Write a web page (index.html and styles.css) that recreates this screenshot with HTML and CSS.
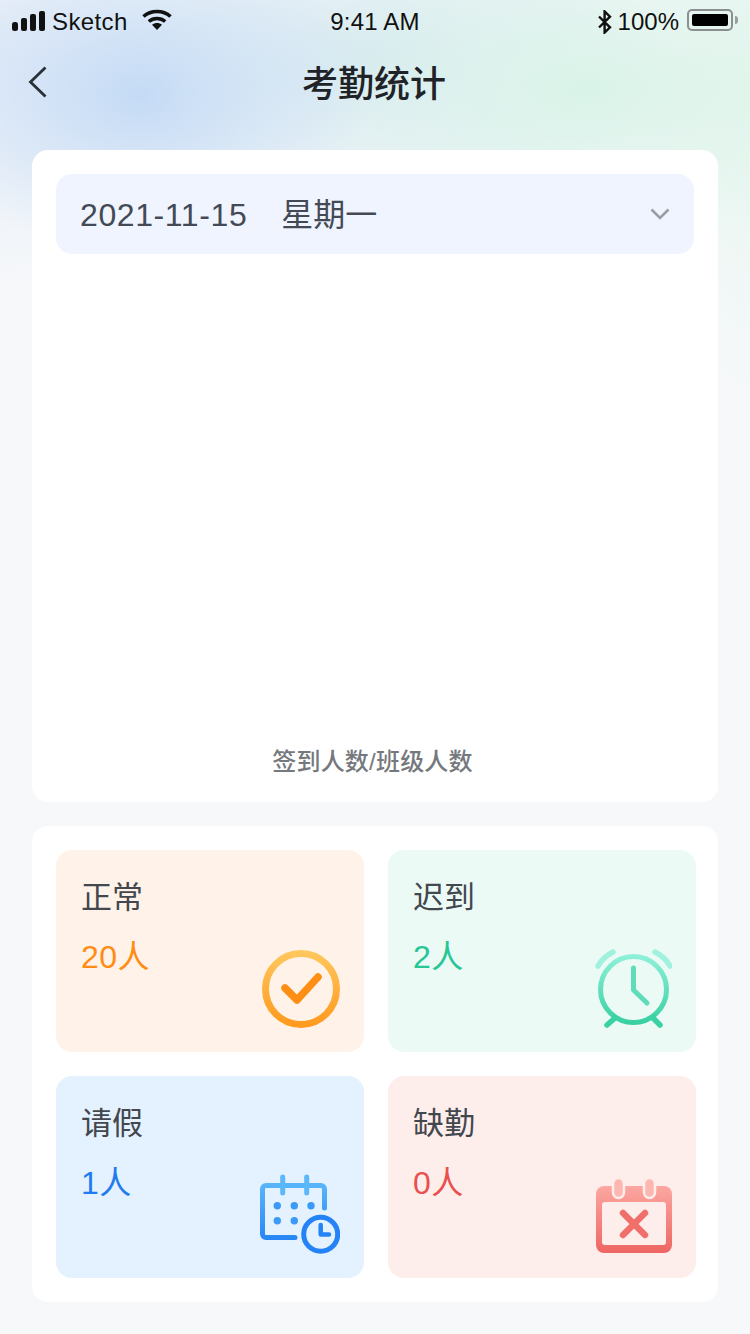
FILE: index.html
```html
<!DOCTYPE html>
<html lang="zh-CN">
<head>
    <meta charset="UTF-8">
    <meta name="viewport" content="width=device-width, initial-scale=1.0">
    <title>考勤统计</title>
    <link rel="stylesheet" href="styles.css">
</head>
<body>
    <div id="page">
        <!-- 状态栏 -->
        <div class="status-bar">
            <div class="status-left">
                <svg class="signal" width="33" height="20" viewBox="0 0 33 20">
                    <rect x="0" y="11" width="6" height="9" rx="2.5"/>
                    <rect x="9" y="7" width="6" height="13" rx="2"/>
                    <rect x="18" y="3" width="6" height="17" rx="2"/>
                    <rect x="27" y="0" width="6" height="20" rx="2"/>
                </svg>
                <span>Sketch</span>
                <svg class="wifi" width="30" height="22" viewBox="0 0 30 22">
                    <path d="M1.500 7.500C9 .8 21 .8 28.500 7.500" fill="none" stroke="#111" stroke-width="3.600"/>
                    <path d="M6.800 12.500c4.600-4 11.800-4 16.400 0" fill="none" stroke="#111" stroke-width="3.600"/>
                    <path d="M10 15.800c3-2.300 7-2.300 10 0L15 21z" fill="#111"/>
                </svg>
            </div>
            <div class="status-time">9:41 AM</div>
            <div class="status-right">
                <svg class="bt" width="14" height="24" viewBox="0 0 14 24">
                    <path d="M1 6.500l11 10.800L6.600 22.600V1.400L12 6.700 1 17.500" fill="none" stroke="#111" stroke-width="2.400"/>
                </svg>
                <span>100%</span>
                <div class="battery"><div class="battery-fill"></div></div>
                <div class="battery-cap"></div>
            </div>
        </div>

        <!-- 导航 -->
        <div class="nav">
            <svg class="back" width="20" height="32" viewBox="0 0 20 32">
                <path d="M17.500 1.500L2.500 16l15 14.500" fill="none" stroke="#2b3036" stroke-width="2.800"/>
            </svg>
            <h1 class="nav-title">考勤统计</h1>
        </div>

        <!-- 日期和图表 -->
        <div class="card chart-card">
            <div class="date-select">
                <span class="date-text">2021-11-15<i class="week">星期一</i></span>
                <svg width="20" height="12" viewBox="0 0 20 12">
                    <path d="M1.500 1.500L10 10l8.500-8.500" fill="none" stroke="#9a9da3" stroke-width="2.600"/>
                </svg>
            </div>
            <div class="chart-caption">签到人数/班级人数</div>
        </div>

        <!-- 统计 -->
        <div class="card stat-card">
            <div class="stat-grid">
                <div class="tile tile-normal">
                    <div class="tile-name">正常</div>
                    <div class="tile-num">20人</div>
                    <svg class="tile-icon" width="80" height="80" viewBox="0 0 80 80">
                        <defs>
                            <linearGradient id="gOrange" x1="0" y1="0" x2="0" y2="1">
                                <stop offset="0" stop-color="#ffc65c"/>
                                <stop offset="1" stop-color="#ff9a1f"/>
                            </linearGradient>
                        </defs>
                        <circle cx="41" cy="41" r="35.500" fill="none" stroke="url(#gOrange)" stroke-width="7"/>
                        <path d="M25 40l12 12L58 29" fill="none" stroke="#ff8f14" stroke-width="7.500" stroke-linecap="round" stroke-linejoin="round"/>
                    </svg>
                </div>
                <div class="tile tile-late">
                    <div class="tile-name">迟到</div>
                    <div class="tile-num">2人</div>
                    <svg class="tile-icon" width="84" height="80" viewBox="0 0 84 80">
                        <defs>
                            <linearGradient id="gGreen" gradientUnits="userSpaceOnUse" x1="0" y1="8" x2="0" y2="78">
                                <stop offset="0" stop-color="#8df0d8"/>
                                <stop offset="1" stop-color="#35cf9f"/>
                            </linearGradient>
                        </defs>
                        <circle cx="45.500" cy="41.500" r="33" fill="none" stroke="url(#gGreen)" stroke-width="5"/>
                        <path d="M45.500 20v22L59 55" fill="none" stroke="#5fdcb9" stroke-width="5" stroke-linecap="round" stroke-linejoin="round"/>
                        <path d="M10 18Q15 9 25 4M67 4Q77 9 82 18" fill="none" stroke="#a0f2df" stroke-width="5.500" stroke-linecap="round"/>
                        <path d="M19 77l8-7M72 77l-7-7" fill="none" stroke="#3ad2a4" stroke-width="5.500" stroke-linecap="round"/>
                    </svg>
                </div>
                <div class="tile tile-leave">
                    <div class="tile-name">请假</div>
                    <div class="tile-num">1人</div>
                    <svg class="tile-icon" width="80" height="80" viewBox="0 0 80 80">
                        <defs>
                            <linearGradient id="gBlue" gradientUnits="userSpaceOnUse" x1="0" y1="0" x2="0" y2="78">
                                <stop offset="0" stop-color="#62bdfb"/>
                                <stop offset="1" stop-color="#1c7cf5"/>
                            </linearGradient>
                        </defs>
                        <path d="M35 63.500H6a3.500 3.500 0 0 1-3.500-3.500V15A3.500 3.500 0 0 1 6 11.500h55a3.500 3.500 0 0 1 3.500 3.500v19" fill="none" stroke="url(#gBlue)" stroke-width="5" stroke-linecap="round"/>
                        <path d="M22.700 3v16M46.700 3v16" fill="none" stroke="#5cb8fa" stroke-width="5" stroke-linecap="round"/>
                        <g fill="#3b99f8">
                            <circle cx="17.300" cy="31.700" r="3.700"/><circle cx="34.300" cy="31.700" r="3.700"/><circle cx="51" cy="31.700" r="3.700"/>
                            <circle cx="17.300" cy="46.700" r="3.700"/><circle cx="34.300" cy="46.700" r="3.700"/>
                        </g>
                        <circle cx="60.700" cy="60.300" r="17" fill="#e4f1fe" stroke="#2483f6" stroke-width="5"/>
                        <path d="M60.700 51v9.500H69" fill="none" stroke="#2483f6" stroke-width="4.500" stroke-linecap="round" stroke-linejoin="round"/>
                    </svg>
                </div>
                <div class="tile tile-absent">
                    <div class="tile-name">缺勤</div>
                    <div class="tile-num">0人</div>
                    <svg class="tile-icon" width="84" height="80" viewBox="0 0 84 80">
                        <defs>
                            <linearGradient id="gRed" gradientUnits="userSpaceOnUse" x1="0" y1="8" x2="0" y2="78">
                                <stop offset="0" stop-color="#fdaba5"/>
                                <stop offset="1" stop-color="#ee6663"/>
                            </linearGradient>
                        </defs>
                        <rect x="8" y="12" width="76" height="67" rx="8" fill="url(#gRed)"/>
                        <rect x="14" y="28" width="64" height="43" rx="3" fill="#feeeeb"/>
                        <rect x="25" y="4" width="11" height="20" rx="5.500" fill="#fbb7b0" stroke="#feeeeb" stroke-width="2.500"/>
                        <rect x="56" y="4" width="11" height="20" rx="5.500" fill="#fbb7b0" stroke="#feeeeb" stroke-width="2.500"/>
                        <path d="M35 39l22 22M57 39L35 61" fill="none" stroke="#f06f6b" stroke-width="6.500" stroke-linecap="round"/>
                    </svg>
                </div>
            </div>
        </div>
    </div>
</body>
</html>
```
FILE: styles.css
```css
*{
    margin: 0;
    padding: 0;
    box-sizing: border-box;
}
body{
    width: 750px;
    font-family: "Liberation Sans", "Noto Sans CJK SC", sans-serif;
    background: #f6f8fa;
}
#page{
    height: 1334px;
    padding: 0 32px;
    background:
        radial-gradient(ellipse 230px 160px at 140px 95px, rgba(194,217,245,0.95), rgba(194,217,245,0)),
        radial-gradient(ellipse 300px 170px at 590px 90px, rgba(216,243,231,0.95), rgba(216,243,231,0)),
        radial-gradient(ellipse 300px 170px at 370px 60px, rgba(212,232,240,0.9), rgba(212,232,240,0)),
        radial-gradient(ellipse 140px 300px at 770px 100px, rgba(228,246,236,0.8), rgba(228,246,236,0)),
        radial-gradient(ellipse 200px 230px at 0 60px, rgba(226,235,247,0.8), rgba(226,235,247,0)),
        #f6f8fa;
}

/* 状态栏 */
.status-bar{
    height: 44px;
    margin: 0 -32px;
    padding: 0 12px;
    display: grid;
    grid-template-columns: 1fr auto 1fr;
    align-items: center;
    font-size: 24px;
    color: #111;
}
.status-left,.status-right{
    display: flex;
    align-items: center;
}
.status-right{
    justify-content: flex-end;
}
.signal{
    fill: #111;
    margin-top: -3px;
}
.status-left span{
    margin-left: 7px;
    letter-spacing: 0.4px;
}
.status-time{
    letter-spacing: 0.2px;
}
.wifi{
    margin-left: 14px;
    margin-top: -4px;
}
.status-right span{
    margin-left: 6px;
}
.battery{
    width: 46px;
    height: 22px;
    margin-left: 8px;
    padding: 3px;
    border: 2px solid #8b8f91;
    border-radius: 5px;
    margin-top: -4px;
}
.battery-fill{
    height: 100%;
    background: #000;
    border-radius: 2px;
}
.battery-cap{
    width: 3px;
    height: 8px;
    margin-left: 2px;
    margin-top: -4px;
    background: #9a9da0;
    border-radius: 0 3px 3px 0;
}

/* 导航 */
.nav{
    height: 80px;
    margin-bottom: 26px;
    padding: 0 2px 6px 0;
    display: flex;
    align-items: center;
    justify-content: center;
    position: relative;
}
.back{
    position: absolute;
    left: -4px;
    top: 22px;
}
.nav-title{
    font-size: 36px;
    line-height: 50px;
    font-weight: 500;
    color: #1f2328;
    font-family: "Noto Sans CJK SC", sans-serif;
}

/* 卡片 */
.card{
    background: #fff;
    border-radius: 16px;
    padding: 24px;
}
.chart-card{
    height: 652px;
    margin-bottom: 24px;
    display: flex;
    flex-direction: column;
    justify-content: space-between;
}
.date-select{
    height: 80px;
    padding: 0 24px;
    display: flex;
    align-items: center;
    justify-content: space-between;
    background: #f0f4fe;
    border-radius: 16px;
}
.date-text{
    padding-bottom: 4px;
    font-size: 32px;
    letter-spacing: 0.6px;
    color: #434a56;
}
.week{
    font-style: normal;
    margin-left: 34px;
    letter-spacing: 0;
}
.chart-caption{
    margin-bottom: -1px;
    padding-right: 5px;
    font-size: 24px;
    line-height: 34px;
    font-weight: 500;
    letter-spacing: 0.2px;
    text-align: center;
    color: #75787d;
}
.stat-card{
    height: 476px;
}
.stat-grid{
    display: grid;
    grid-template-columns: 308px 308px;
    grid-auto-rows: 202px;
    gap: 24px;
}
.tile{
    position: relative;
    padding: 25px 25px 0;
    border-radius: 16px;
}
.tile-name{
    font-size: 31px;
    line-height: 46px;
    color: #43474e;
}
.tile-num{
    margin-top: 13px;
    font-size: 32px;
    line-height: 46px;
    letter-spacing: 0.5px;
}
.tile-icon{
    position: absolute;
    right: 24px;
    bottom: 24px;
}
.tile-normal{
    background: #fff3e9;
}
.tile-normal .tile-num{
    color: #ff8c14;
}
.tile-late{
    background: #ecfaf6;
}
.tile-late .tile-num{
    color: #26c795;
}
.tile-leave{
    background: #e4f1fe;
}
.tile-leave .tile-num{
    color: #1f7bf0;
}
.tile-absent{
    background: #feeeeb;
}
.tile-absent .tile-num{
    color: #e9504f;
}
```
